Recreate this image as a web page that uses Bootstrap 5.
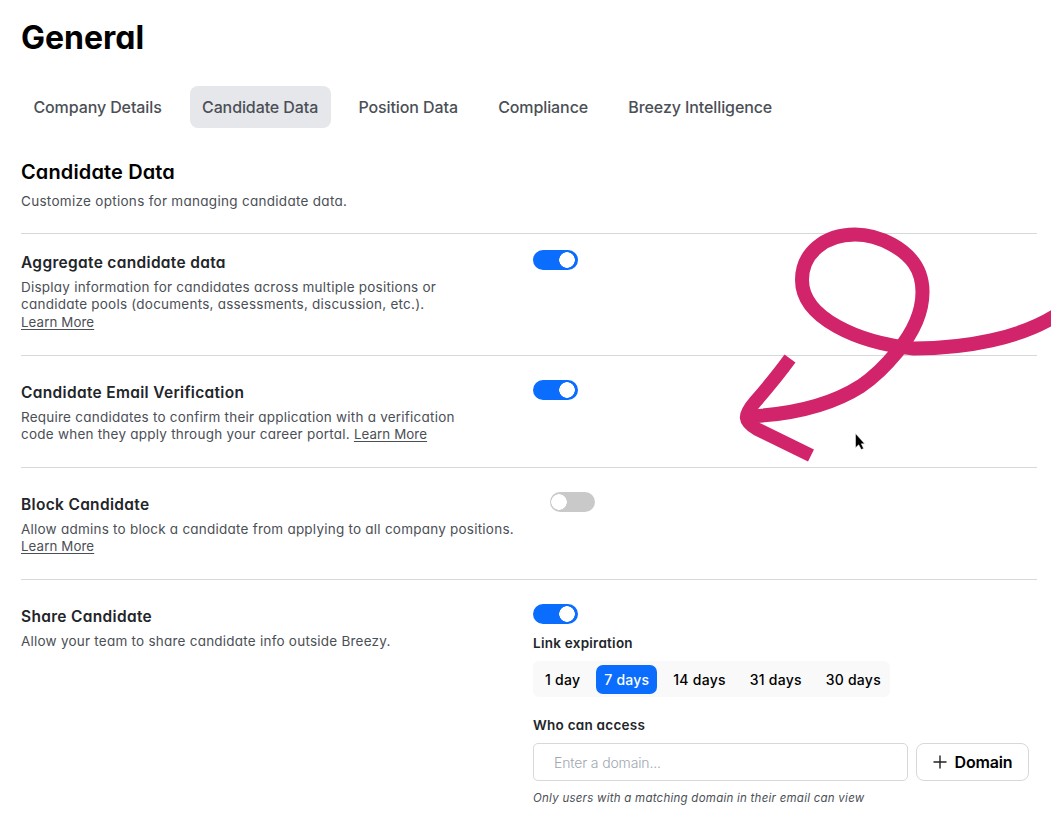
<!DOCTYPE html>
<html lang="en">
<head>
    <meta charset="UTF-8">
    <meta name="viewport" content="width=device-width, initial-scale=1.0">
    <title>General</title>
    <link href="https://cdn.jsdelivr.net/npm/bootstrap@5.3.3/dist/css/bootstrap.min.css" rel="stylesheet">
    <script src="https://cdn.jsdelivr.net/npm/bootstrap@5.3.3/dist/js/bootstrap.bundle.min.js"></script>
    <style>
        body {
            font-family: Inter, sans-serif;
            font-feature-settings: "cv11";
            font-size: 14px;
            color: #4b4f56;
            background: #fff;
            height: 823px;
            overflow: hidden;
        }
        .settings-page { padding: 17px 14px 0 21px; }
        .page-title { font-size: 32px; font-weight: 700; line-height: 42px; color: #000; margin-bottom: 27px; }

        .plain-a { font-feature-settings: normal; }
        .nav-pills { gap: 15.5px; margin-bottom: 31px; }
        .nav-pills .nav-link {
            height: 42px;
            padding: 0 12.4px;
            line-height: 42px;
            font-size: 16px;
            font-weight: 500;
            letter-spacing: -.1px;
            color: #4b4f56;
            border-radius: 8px;
        }
        .nav-pills .nav-link.active { background: #e5e7eb; color: #4b4f56; }

        .section-title { font-size: 20px; font-weight: 600; line-height: 26px; letter-spacing: .13px; color: #000; margin-bottom: 7px; }
        .section-text { font-size: 13.5px; line-height: 18px; letter-spacing: .29px; margin-bottom: 23px; }

        .setting { border-top: 1px solid #d5d9dc; padding-top: 24px; }
        .setting-first { padding-top: 16px; height: 122px; }
        .setting-mid { height: 112px; }
        .setting-info { width: 512px; }
        .setting-name { font-size: 15.5px; font-weight: 600; line-height: 24px; letter-spacing: .32px; color: #222529; margin-bottom: 4px; padding-top: 1px; }
        .setting-text { font-size: 13.5px; line-height: 17.4px; letter-spacing: .23px; margin-bottom: 0; }
        .setting-text a { color: #4b4f56; font-size: 13.3px; letter-spacing: .1px; text-underline-offset: 2px; }

        .form-switch { padding: 0; margin: 0; min-height: 20px; height: 20px; }
        .form-switch .form-check-input {
            display: block;
            float: none;
            width: 45px;
            height: 20px;
            margin: 0;
            border: 0;
            background-color: #0b6dfd;
            background-size: 22px 22px;
            background-position: right -1px center;
            background-image: radial-gradient(circle, #fff 7.5px, transparent 8px);
            background-repeat: no-repeat;
        }
        .form-switch .form-check-input:not(:checked) {
            margin-left: 17px;
            background-color: #c9c9c9;
            background-position: left -2px center;
        }

        .field-label { font-size: 13.5px; font-weight: 600; line-height: 20px; letter-spacing: .25px; color: #222529; }
        .form-switch + .field-label { margin-top: 9px; }
        .expiry { width: 357px; height: 36px; padding: 4px 1px 3px 4px; margin: 8px 0 18px; background: #f9f9f9; border-radius: 6px; }
        .expiry .btn {
            --bs-btn-padding-x: 8px;
            --bs-btn-padding-y: 0;
            --bs-btn-font-size: 14px;
            --bs-btn-font-weight: 500;
            --bs-btn-border-width: 0;
            --bs-btn-border-radius: 7px;
            height: 29px;
            letter-spacing: .25px;
            color: #000;
        }
        .expiry .btn.active { background: #0b6dfd; color: #fff; }

        .domain-row { gap: 8px; margin-top: 8px; }
        .domain-input { width: 375px; height: 38px; padding: 0 20px; font-size: 14px; font-weight: 300; letter-spacing: -.15px; border-color: #d5d9dc; border-radius: 5px; }
        .domain-input::placeholder { color: #a0a7af; }
        .domain-btn { width: 113px; height: 38px; padding: 0; font-size: 16px; font-weight: 600; letter-spacing: -.15px; color: #000; border: 1px solid #d5d9dc; border-radius: 8px; gap: 8px; }
        .domain-hint { font-size: 11.5px; font-style: italic; line-height: 18px; letter-spacing: .25px; margin: 8px 0 0; }

        .overlay-art { position: absolute; left: 0; top: 0; pointer-events: none; }
    </style>
</head>
<body>
    <main class="settings-page">
        <h1 class="page-title">General</h1>
        <ul class="nav nav-pills flex-nowrap plain-a">
            <li class="nav-item"><a class="nav-link" href="#">Company Details</a></li>
            <li class="nav-item"><a class="nav-link active" href="#">Candidate Data</a></li>
            <li class="nav-item"><a class="nav-link" href="#">Position Data</a></li>
            <li class="nav-item"><a class="nav-link" href="#">Compliance</a></li>
            <li class="nav-item"><a class="nav-link" href="#">Breezy Intelligence</a></li>
        </ul>

        <h2 class="section-title">Candidate Data</h2>
        <p class="section-text">Customize options for managing candidate data.</p>

        <section class="setting setting-first d-flex">
            <div class="setting-info flex-shrink-0">
                <h3 class="setting-name">Aggregate candidate data</h3>
                <p class="setting-text">Display information for candidates across multiple positions or<br>candidate pools (documents, assessments, discussion, etc.).<br><a class="plain-a" href="#">Learn More</a></p>
            </div>
            <div class="form-check form-switch">
                <input class="form-check-input" type="checkbox" role="switch" aria-label="Aggregate candidate data" checked>
            </div>
        </section>

        <section class="setting setting-mid d-flex">
            <div class="setting-info flex-shrink-0">
                <h3 class="setting-name">Candidate Email Verification</h3>
                <p class="setting-text">Require candidates to confirm their application with a verification<br>code when they apply through your career portal. <a class="plain-a" href="#">Learn More</a></p>
            </div>
            <div class="form-check form-switch">
                <input class="form-check-input" type="checkbox" role="switch" aria-label="Candidate Email Verification" checked>
            </div>
        </section>

        <section class="setting setting-mid d-flex">
            <div class="setting-info flex-shrink-0">
                <h3 class="setting-name">Block Candidate</h3>
                <p class="setting-text">Allow admins to block a candidate from applying to all company positions.<br><a class="plain-a" href="#">Learn More</a></p>
            </div>
            <div class="form-check form-switch">
                <input class="form-check-input" type="checkbox" role="switch" aria-label="Block Candidate">
            </div>
        </section>

        <section class="setting d-flex">
            <div class="setting-info flex-shrink-0">
                <h3 class="setting-name">Share Candidate</h3>
                <p class="setting-text">Allow your team to share candidate info outside Breezy.</p>
            </div>
            <div>
                <div class="form-check form-switch">
                    <input class="form-check-input" type="checkbox" role="switch" aria-label="Share Candidate" checked>
                </div>
                <div class="field-label">Link expiration</div>
                <div class="expiry d-flex justify-content-between">
                    <button type="button" class="btn">1 day</button>
                    <button type="button" class="btn active">7 days</button>
                    <button type="button" class="btn">14 days</button>
                    <button type="button" class="btn">31 days</button>
                    <button type="button" class="btn">30 days</button>
                </div>
                <div class="field-label">Who can access</div>
                <div class="domain-row d-flex">
                    <input type="text" class="form-control domain-input plain-a" placeholder="Enter a domain...">
                    <button type="button" class="btn domain-btn plain-a d-flex align-items-center justify-content-center">
                        <svg width="14" height="14" viewBox="0 0 14 14" stroke="#222" stroke-width="1.4"><path d="M7 .5v13M.5 7h13"/></svg>
                        <span>Domain</span>
                    </button>
                </div>
                <p class="domain-hint">Only users with a matching domain in their email can view</p>
            </div>
        </section>
    </main>

    <!-- hand-drawn arrow and mouse pointer lying over the page -->
    <svg class="overlay-art" width="1051" height="823" viewBox="0 0 1051 823" fill="none">
        <g stroke="#d1246b" stroke-width="14">
            <path d="M1056 315.500C1020 338 967 348.500 914 348.500C858 343 802 318 802 280C802 253 825 234.500 855 234.500C867 234.500 880 238 892 244.500C911 255 922.500 269 922.500 292C922.500 313 912 334 897 352C888 363 877 375 861 386C836 402 802 414 748 416.500"/>
            <path stroke-width="13.500" d="M790 358.500C778 375 768 387 755 402C743 416 744 421 757 429L811 455.500"/>
        </g>
        <path d="M855.500 433.500v14.200l3.200-2.900 2.600 4.800 2.300-1.200-2.300-4.600h3.400z" fill="#000" stroke="#fff" stroke-width=".5"/>
    </svg>
</body>
</html>
